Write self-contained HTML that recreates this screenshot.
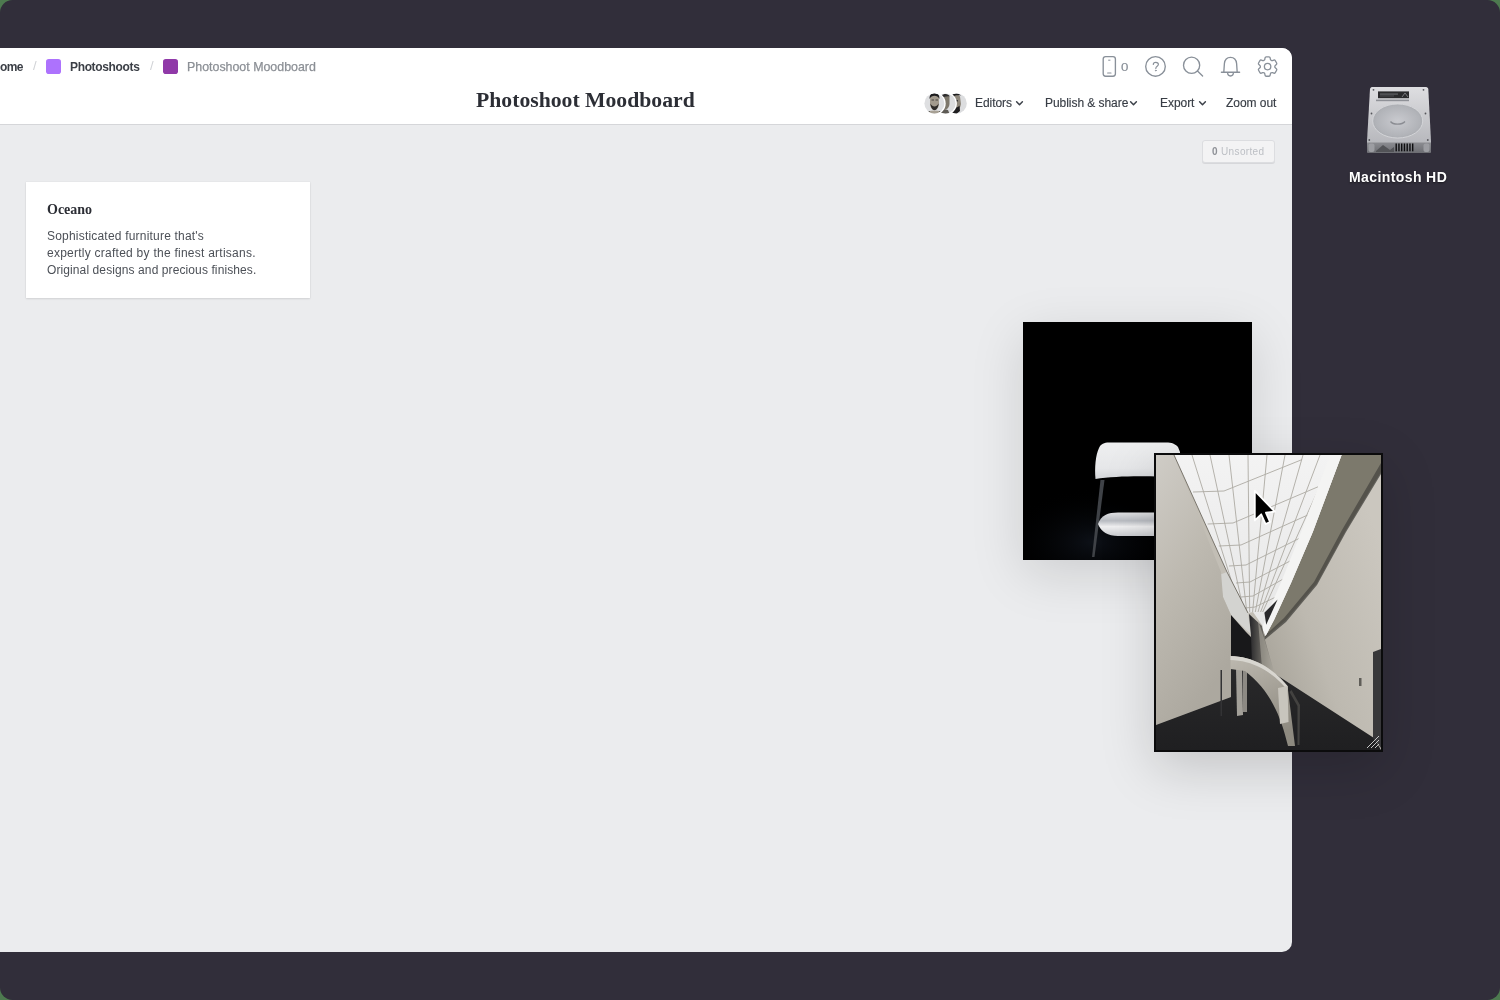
<!DOCTYPE html>
<html><head><meta charset="utf-8">
<style>
*{margin:0;padding:0;box-sizing:border-box}
html{width:1500px;height:1000px;overflow:hidden;background:#4d7a4f}
body{position:relative;width:1500px;height:1000px;overflow:hidden;background:#312e3a;border-radius:12.5px;font-family:"Liberation Sans",sans-serif}
.a{position:absolute;white-space:nowrap;will-change:transform}
#win{position:absolute;left:-12px;top:48px;width:1304px;height:904px;border-radius:10px;overflow:hidden;background:#ebecee}
#hdr{position:absolute;left:0;top:0;width:1304px;height:77px;background:#fff;border-bottom:1px solid #d5d6d9}
.crumb{font-size:12px;font-weight:700;color:#3b3f46;line-height:14px}
.hbtn{font-size:12px;color:#383d45;line-height:14px;letter-spacing:-0.05px;-webkit-text-stroke:0.15px #383d45}
.serif{font-family:"Liberation Serif",serif;font-weight:700}
</style></head><body>

<div id="win">
  <div id="hdr"></div>
</div>

<!-- breadcrumb (absolute page coords) -->
<div class="a crumb" style="left:-0.5px;top:60px;letter-spacing:-0.6px">ome</div>
<div class="a" style="left:33px;top:58px;font-size:13px;color:#d0d2d6;line-height:15px">/</div>
<div class="a" style="left:46px;top:59px;width:15px;height:15px;border-radius:2.8px;background:#ad72fd"></div>
<div class="a crumb" style="left:70px;top:60px;letter-spacing:-0.35px">Photoshoots</div>
<div class="a" style="left:150px;top:58px;font-size:13px;color:#d0d2d6;line-height:15px">/</div>
<div class="a" style="left:163px;top:59px;width:15px;height:15px;border-radius:2.8px;background:#9039a8"></div>
<div class="a" style="left:187px;top:60px;font-size:12.4px;color:#8b8f95;line-height:14px;-webkit-text-stroke:0.25px #8b8f95">Photoshoot Moodboard</div>

<!-- title -->
<div class="a serif" style="left:476px;top:89px;font-size:21.7px;color:#2c2e35;line-height:22px">Photoshoot Moodboard</div>


<!-- right header icons -->
<svg class="a" style="left:1090px;top:50px" width="200" height="32" viewBox="1090 50 200 32" fill="none" stroke="#899099" stroke-width="1.35" stroke-linecap="round" stroke-linejoin="round">
  <rect x="1103.2" y="56.6" width="12.2" height="19.6" rx="2.4"/>
  <line x1="1108.6" y1="60.2" x2="1110" y2="60.2" stroke-width="1"/>
  <line x1="1107.6" y1="73" x2="1111" y2="73" stroke-width="1.1"/>
  <circle cx="1155.5" cy="66.4" r="9.8"/>
  <path d="M1153.3,64.4 C1153.3,62.9 1154.4,62.4 1155.8,62.4 C1157.3,62.4 1158.4,63.3 1158.4,64.5 C1158.4,66.2 1155.8,66.4 1155.8,68.4" stroke-width="1.15"/>
  <circle cx="1155.8" cy="70.6" r="0.5" fill="#899099" stroke-width="0.7"/>
  <circle cx="1191.6" cy="65.2" r="8.1"/>
  <line x1="1197.5" y1="71" x2="1202.6" y2="76"/>
  <path d="M1221.4,72.2 L1239.6,72.2 M1223.8,72.2 L1224.4,63.5 C1224.8,59.4 1227.4,57.3 1230.5,57.3 C1233.6,57.3 1236.2,59.4 1236.6,63.5 L1237.2,72.2 M1227.6,72.6 C1227.6,74.8 1228.9,76 1230.5,76 C1232.1,76 1233.4,74.8 1233.4,72.6"/>
  <g transform="translate(1267.6,66.6) scale(1.07) translate(-12,-12)" stroke-width="1.22">
    <path d="M9.594 3.94c.09-.542.56-.94 1.11-.94h2.593c.55 0 1.02.398 1.11.94l.213 1.281c.063.374.313.686.645.87.074.04.147.083.22.127.325.196.72.257 1.075.124l1.217-.456a1.125 1.125 0 0 1 1.37.49l1.296 2.247a1.125 1.125 0 0 1-.26 1.431l-1.003.827c-.293.241-.438.613-.43.992a7.723 7.723 0 0 1 0 .255c-.008.378.137.75.43.991l1.004.827c.424.35.534.955.26 1.43l-1.298 2.247a1.125 1.125 0 0 1-1.369.491l-1.217-.456c-.355-.133-.75-.072-1.076.124a6.47 6.47 0 0 1-.22.128c-.331.183-.581.495-.644.869l-.213 1.281c-.09.543-.56.94-1.11.94h-2.594c-.55 0-1.019-.398-1.11-.94l-.213-1.281c-.062-.374-.312-.686-.644-.87a6.520 6.520 0 0 1-.22-.127c-.325-.196-.72-.257-1.076-.124l-1.217.456a1.125 1.125 0 0 1-1.369-.49l-1.297-2.247a1.125 1.125 0 0 1 .26-1.431l1.004-.827c.292-.24.437-.613.43-.991a6.932 6.932 0 0 1 0-.255c.007-.38-.138-.751-.43-.992l-1.004-.827a1.125 1.125 0 0 1-.26-1.43l1.297-2.247a1.125 1.125 0 0 1 1.37-.491l1.216.456c.356.133.751.072 1.076-.124.072-.044.146-.086.22-.128.332-.183.582-.495.644-.869l.214-1.28Z"/>
    <circle cx="12" cy="12" r="3"/>
  </g>
</svg>
<div class="a" style="left:1120.5px;top:61px;font-size:11px;color:#858c95;line-height:13px;transform:scaleX(1.2);transform-origin:0 0;-webkit-text-stroke:0.15px #858c95">0</div>

<!-- avatars -->
<svg class="a" style="left:920px;top:88px" width="52" height="30" viewBox="920 88 52 30">
  <defs>
    <clipPath id="c1"><circle cx="934.4" cy="103.4" r="10"/></clipPath>
    <clipPath id="c2"><circle cx="945.6" cy="103.4" r="10"/></clipPath>
    <clipPath id="c3"><circle cx="956.8" cy="103.4" r="10"/></clipPath>
  </defs>
  <circle cx="956.8" cy="103.4" r="11.3" fill="#fff"/>
  <g clip-path="url(#c3)">
    <rect x="940" y="90" width="30" height="30" fill="#dcdddf"/>
    <path d="M951,96 C953,93.5 958,93.5 960,96.5 L961,104 C960,110 957,112 954,112 L949,114 C950,108 950,101 951,96Z" fill="#8e877b"/>
    <path d="M950,95 C953,92.6 958,92.4 961,95.5 C958,95 954,95.3 951,97.5Z" fill="#1f1e20"/>
    <rect x="953" y="100" width="5" height="1.5" fill="#3b3a3a"/>
    <path d="M951,105 C953,108 957,108.5 959.5,105.5 L960,111 L955,115 L948,115Z" fill="#1e1d1f"/>
  </g>
  <circle cx="945.6" cy="103.4" r="11.3" fill="#fff"/>
  <g clip-path="url(#c2)">
    <rect x="930" y="90" width="30" height="30" fill="#dcdddf"/>
    <path d="M942.5,96 C944,94 948,94 949.5,97 L949.5,104 C949,108 947,109.5 944.5,110 L940,115 C940.5,108 941,101 942.5,96Z" fill="#7d776b"/>
    <path d="M941.5,95.5 C944,93.2 948.5,93.5 950,96.5 C947,96 944,96.5 942,99Z" fill="#2f2e2e"/>
    <path d="M938,114 C940,110 944,109 948,110 L950,115Z" fill="#5d5a54"/>
  </g>
  <circle cx="934.4" cy="103.4" r="11.3" fill="#fff"/>
  <g clip-path="url(#c1)">
    <rect x="920" y="90" width="30" height="30" fill="#dedfe1"/>
    <path d="M930,98 C930,95 932,94 934.5,94 C937,94 939,95 939,98 L939,103 C939,107.5 937,110 934.5,110 C932,110 930,107.5 930,103Z" fill="#a39b8e"/>
    <path d="M929.6,99 C929.2,95 931.5,93 934.5,93 C937.5,93 939.8,95 939.4,99 C938.5,96.5 936.5,95.8 934.5,95.8 C932.5,95.8 930.5,96.5 929.6,99Z" fill="#1d1c1e"/>
    <rect x="931.5" y="99.5" width="2.5" height="1" fill="#4a4643"/><rect x="935.5" y="99.5" width="2.5" height="1" fill="#4a4643"/>
    <path d="M930.3,103.5 C930.8,107.5 932.6,110.2 934.5,110.2 C936.4,110.2 938.2,107.5 938.7,103.5 C937.5,105.5 936,106.5 934.5,106.5 C933,106.5 931.5,105.5 930.3,103.5Z" fill="#2f2c2a"/>
    <path d="M925,115 C926,111.5 929.5,110.5 934.5,110.5 C939.5,110.5 943,111.5 944,115Z" fill="#a8a195"/>
    <path d="M926,113 L929.5,111 L930,114Z M943,113 L939.5,111 L939,114Z" fill="#141414"/>
  </g>
</svg>

<!-- header buttons -->
<div class="a hbtn" style="left:975px;top:95.5px">Editors</div>
<div class="a hbtn" style="left:1045px;top:95.5px">Publish &amp; share</div>
<div class="a hbtn" style="left:1160px;top:95.5px">Export</div>
<div class="a hbtn" style="left:1226px;top:95.5px">Zoom out</div>
<svg class="a" style="left:1010px;top:95px" width="200" height="16" viewBox="1010 95 200 16" fill="none" stroke="#3d424a" stroke-width="1.5" stroke-linecap="round" stroke-linejoin="round">
  <path d="M1016.6,101.8 L1019.5,104.8 L1022.4,101.8"/>
  <path d="M1130.6,101.8 L1133.5,104.8 L1136.4,101.8"/>
  <path d="M1199.6,101.8 L1202.5,104.8 L1205.4,101.8"/>
</svg>


<!-- unsorted button -->
<div class="a" style="left:1202px;top:140px;width:73px;height:23px;border-radius:3px;background:#f3f3f4;border:1px solid #dcdde0;box-shadow:0 1px 0 #d6d7da"></div>
<div class="a" style="left:1211.5px;top:144.5px;font-size:10px;letter-spacing:0.35px;line-height:13px;color:#bcbfc4"><b style="color:#8e9197">0</b> Unsorted</div>

<!-- note card -->
<div class="a" style="left:26px;top:182px;width:284px;height:116px;background:#fff;box-shadow:0 1px 2px rgba(0,0,0,0.10),0 0 0 0.5px rgba(0,0,0,0.04)"></div>
<div class="a serif" style="left:47px;top:202px;font-size:14px;line-height:16px;color:#2c2e35">Oceano</div>
<div class="a" style="left:47px;top:228px;font-size:12px;line-height:17px;color:#4c5057;letter-spacing:0.2px">Sophisticated furniture that's</div>
<div class="a" style="left:47px;top:245px;font-size:12px;line-height:17px;color:#4c5057;letter-spacing:0.25px">expertly crafted by the finest artisans.</div>
<div class="a" style="left:47px;top:262px;font-size:12px;line-height:17px;color:#4c5057;letter-spacing:0.1px">Original designs and precious finishes.</div>

<!-- chair image -->
<div class="a" style="left:1023px;top:322px;width:229px;height:238px;background:#000;box-shadow:0 14px 50px rgba(0,0,0,0.13)"></div>
<svg class="a" style="left:1023px;top:322px" width="229" height="238" viewBox="1023 322 229 238">
  <defs>
    <linearGradient id="back" x1="0" y1="0" x2="0" y2="1"><stop offset="0" stop-color="#eeeff0"/><stop offset="0.7" stop-color="#e6e7e9"/><stop offset="1" stop-color="#d2d4d7"/></linearGradient>
    <linearGradient id="seat" x1="0" y1="0" x2="0" y2="1"><stop offset="0" stop-color="#e2e3e5"/><stop offset="0.35" stop-color="#b9bcc2"/><stop offset="0.6" stop-color="#f0f0f1"/><stop offset="1" stop-color="#c9cbcf"/></linearGradient>
  </defs>
  <radialGradient id="fl" cx="0.35" cy="0.85" r="0.45"><stop offset="0" stop-color="#0d1118"/><stop offset="1" stop-color="#000" stop-opacity="0"/></radialGradient>
  <rect x="1023" y="440" width="200" height="120" fill="url(#fl)"/>
  <path d="M1095.5,479 C1094.5,468 1095.5,455 1099,448 C1101,444 1104,442.6 1109,442.6 L1166,442.6 C1172,442.6 1175,444 1178,447 L1180,452 L1180,478 C1160,476 1120,475 1095.5,479Z" fill="url(#back)"/>
  <path d="M1100.5,480 L1104.5,480 L1094.5,557 L1092,557Z" fill="#3f4247"/>
  <path d="M1098,524 C1101,515 1108,512.5 1118,512.5 L1160,512.5 L1160,536 L1118,536 C1108,536 1101,532 1098,524Z" fill="url(#seat)"/>
</svg>

<!-- architecture image -->
<div class="a" style="left:1154px;top:453px;width:229px;height:299px;background:#0b0b0c;box-shadow:0 16px 50px rgba(0,0,0,0.17)"></div>
<svg class="a" style="left:1156px;top:455px" width="225" height="295" viewBox="1156 455 225 295">
  <defs>
    <linearGradient id="lw" x1="0" y1="0" x2="0.4" y2="1"><stop offset="0" stop-color="#cfccc6"/><stop offset="0.5" stop-color="#bdb9b0"/><stop offset="1" stop-color="#aca89f"/></linearGradient>
    <linearGradient id="rw" x1="1" y1="0.3" x2="0.2" y2="1"><stop offset="0" stop-color="#cbc7bf"/><stop offset="0.6" stop-color="#bdb9b0"/><stop offset="1" stop-color="#a6a298"/></linearGradient>
    <linearGradient id="sky" x1="0" y1="0" x2="0" y2="1"><stop offset="0" stop-color="#f3f3f3"/><stop offset="1" stop-color="#e6e6e6"/></linearGradient>
    <linearGradient id="pil" x1="0" y1="0" x2="1" y2="0"><stop offset="0" stop-color="#242427"/><stop offset="0.6" stop-color="#6f6c65"/><stop offset="1" stop-color="#a9a59c"/></linearGradient>
    <linearGradient id="arch" x1="0" y1="0" x2="0.3" y2="1"><stop offset="0" stop-color="#bdb9b0"/><stop offset="1" stop-color="#8e8a80"/></linearGradient>
    <linearGradient id="flr" x1="0" y1="0" x2="0" y2="1"><stop offset="0" stop-color="#2a2a2b"/><stop offset="1" stop-color="#1f1f21"/></linearGradient>
  </defs>
  <rect x="1156" y="455" width="225" height="295" fill="#c2beb5"/>
  <!-- right wall -->
  <path d="M1320,455 L1381,455 L1381,750 L1374,738 L1272,672 L1262,640 L1275,600Z" fill="url(#rw)"/>
  <!-- beam -->
  <path d="M1341.6,455 L1381,455 L1381,472 L1346,530 L1317,583 L1286,620 L1264.4,638 L1265.6,636 L1274,620 L1291,583 L1312.8,532Z" fill="#7c796c"/>
  <path d="M1381,463 L1381,474 L1346,532 L1317,585 L1286,622 L1264.4,640 L1264.4,636 L1284,618 L1314,582 L1342,530Z" fill="#4a4843" opacity="0.8"/>
  <!-- skylight -->
  <path d="M1174,455 L1341.6,455 L1312.8,532 L1291,583 L1274,620 L1265.6,636 L1262,625 L1253,612 L1248,613 L1227,572Z" fill="url(#sky)"/>
  <!-- grid lines -->
  <g stroke="#a29e95" stroke-width="0.9" fill="none" opacity="0.85">
    <path d="M1192,455 L1241.2,612"/>
    <path d="M1210,455 L1243.9,612"/>
    <path d="M1229,455 L1246.8,612"/>
    <path d="M1248,455 L1249.7,612"/>
    <path d="M1267,455 L1252.6,612"/>
    <path d="M1285,455 L1255.3,612"/>
    <path d="M1303,455 L1258.0,612"/>
    <path d="M1320,455 L1260.6,612"/>
    <path d="M1334,455 L1262.7,612"/>
    <path d="M1193,492 L1224,491 L1302,459.6"/>
    <path d="M1207.6,524 L1233,523 L1318,486.8"/>
    <path d="M1218.8,546 L1241,545 L1310,514"/>
    <path d="M1229,566 L1246,565 L1300,538"/>
    <path d="M1236,583 L1250,582 L1292,560"/>
    <path d="M1241,597 L1253,596 L1285,578"/>
    <path d="M1245,608 L1255,607 L1280,595"/>
  </g>
  <path d="M1330,455 L1341.6,455 L1312.8,532 L1291,583 L1274,620 L1265.6,636 L1262,628 L1268,612 L1282,580 L1302,530Z" fill="#f4f4f3"/>
  <!-- light fin left -->
  <path d="M1219,575 L1227,572 L1248,613 L1251,634 L1246,630 L1231,615 L1223,597Z" fill="#d3d3d0"/>
  <!-- left wall -->
  <path d="M1156,455 L1174,455 L1221,572 L1223,597 L1231,615 L1231,697 L1156,725Z" fill="url(#lw)"/>
  <path d="M1174,455 L1227,572 L1248,613" stroke="#6f6b62" stroke-width="0.9" fill="none"/>
  <!-- small dark opening -->
  <path d="M1264.4,612.8 L1277.6,599.6 L1266.2,624.8Z" fill="#29292b"/>
  <!-- corridor + pillar -->
  <path d="M1231,615 L1246,632 L1252,638 L1252,662 L1231,662Z" fill="#18181a"/>
  <path d="M1249,614 L1262,626 L1265,640 L1274,672 L1252,664 L1251,636Z" fill="url(#pil)"/>
  <path d="M1258,620 L1264,638 L1274,672 L1262,668Z" fill="#aaa69d" opacity="0.6"/>
  <!-- floor -->
  <path d="M1156,725 L1231,697 L1231,660 L1252,663 L1272,672 L1374,738 L1381,750 L1156,750Z" fill="url(#flr)"/>
  <!-- posts left of arch -->
  <path d="M1236,668 L1242,666 L1243,715 L1237,716Z" fill="#a3a099"/>
  <path d="M1243,669 L1247,668 L1247,712 L1243,712Z" fill="#8d8a84"/>
  <path d="M1220.5,670 L1222,670 L1222,716 L1220.5,716Z" fill="#333335"/>
  <!-- arch / railing -->
  <path d="M1230.5,656 C1252,656.5 1272,667 1287.5,686 L1295,746 L1288,746 C1281,716 1270,690 1245,671 L1230.5,669Z" fill="url(#arch)"/>
  <path d="M1230.5,656 C1252,656.5 1272,667 1287.5,686 L1287.5,690 C1272,671 1252,660.5 1230.5,660Z" fill="#d8d6d0"/>
  <path d="M1278,688 L1287.5,686 L1288.5,722 L1280,724Z" fill="#c8c5bd"/>
  <path d="M1289.5,692 L1291.5,690 L1300,705 L1299.5,745 L1297.5,745 L1297.5,706Z" fill="#434240"/>
  <!-- door -->
  <path d="M1373,652 L1381,649 L1381,748 L1373,738Z" fill="#38383a"/>
  <rect x="1359" y="678" width="2.5" height="8" fill="#5f5d58"/>
  
  <!-- resize handle -->
  <g stroke="#d8d8d8" stroke-width="0.9"><path d="M1367,748 L1379,736"/><path d="M1371,748 L1379,740"/><path d="M1375,748 L1379,744"/></g>
</svg>

<!-- cursor -->
<svg class="a" style="left:1250px;top:486px" width="30" height="42" viewBox="0 0 30 42">
  <path d="M4.8,4.8 L4.8,34.4 L11.2,28.3 L15.6,38 L20,36 L15.9,26.6 L24.8,25.6Z" fill="#000" stroke="#fff" stroke-width="1.8" stroke-linejoin="round"/>
</svg>

<!-- Macintosh HD -->
<svg class="a" style="left:1360px;top:82px" width="80" height="78" viewBox="1360 82 80 78">
  <defs>
    <linearGradient id="hdtop" x1="0" y1="0" x2="0" y2="1"><stop offset="0" stop-color="#dedee1"/><stop offset="1" stop-color="#b0b1b6"/></linearGradient>
    <radialGradient id="plat" cx="0.5" cy="0.5" r="0.55"><stop offset="0" stop-color="#c9cacf"/><stop offset="0.8" stop-color="#b1b3b8"/><stop offset="1" stop-color="#a6a8ad"/></radialGradient>
    <linearGradient id="hdfront" x1="0" y1="0" x2="0" y2="1"><stop offset="0" stop-color="#8b8c91"/><stop offset="1" stop-color="#6c6d72"/></linearGradient>
  </defs>
  <path d="M1372,87 L1426,87 C1427.5,87 1428,88 1428.3,89 L1431,141 L1431,151 C1431,152.5 1430,153 1429,153 L1369,153 C1368,153 1367,152.5 1367,151 L1367,141 L1370,89 C1370.3,88 1370.8,87 1372,87Z" fill="url(#hdtop)"/>
  <ellipse cx="1397.7" cy="121" rx="25" ry="17" fill="url(#plat)" stroke="#d6d7da" stroke-width="0.9"/>
  <path d="M1390.5,121.5 C1393,125 1402,125 1405,121.5" stroke="#8a8c92" stroke-width="1.3" fill="none"/>
  <rect x="1378" y="91.4" width="31" height="6.8" fill="#2b2b2d"/>
  <rect x="1380" y="93.6" width="18" height="0.9" fill="#77787c"/><rect x="1380" y="95.6" width="14" height="0.7" fill="#5e5f63"/>
  <path d="M1402,97 L1405,93 L1408,97" stroke="#9a9ba0" stroke-width="0.7" fill="none"/>
  <rect x="1376" y="99.6" width="33" height="1.6" fill="#8f9197"/>
  <path d="M1367,142.5 L1431,142.5 L1431,151 C1431,152.5 1430,153 1429,153 L1369,153 C1368,153 1367,152.5 1367,151Z" fill="url(#hdfront)"/>
  <rect x="1368.5" y="143.5" width="6" height="8.5" rx="2" fill="#9c9da2"/>
  <rect x="1423.5" y="143.5" width="6" height="8.5" rx="2" fill="#9c9da2"/>
  <path d="M1376,151 L1383,145 L1390,150 L1394,147 L1394,152 L1376,152Z" fill="#525357"/>
  <g fill="#0e0e10"><rect x="1395.50" y="143.5" width="1.4" height="7.8"/><rect x="1398.25" y="143.5" width="1.4" height="7.8"/><rect x="1401.00" y="143.5" width="1.4" height="7.8"/><rect x="1403.75" y="143.5" width="1.4" height="7.8"/><rect x="1406.50" y="143.5" width="1.4" height="7.8"/><rect x="1409.25" y="143.5" width="1.4" height="7.8"/><rect x="1412.00" y="143.5" width="1.4" height="7.8"/></g>
  <g fill="#55565b"><circle cx="1373.5" cy="89.8" r="0.9"/><circle cx="1423.5" cy="89.8" r="0.9"/><circle cx="1371.5" cy="113.5" r="0.9"/><circle cx="1425.5" cy="113.5" r="0.9"/><circle cx="1369.3" cy="140" r="0.9"/><circle cx="1427.8" cy="140" r="0.9"/></g>
</svg>
<div class="a" style="left:1349px;top:168.5px;font-size:14px;font-weight:700;line-height:16px;color:#fff;letter-spacing:0.4px;text-shadow:0 1px 2px rgba(0,0,0,0.5)">Macintosh HD</div>

</body></html>
